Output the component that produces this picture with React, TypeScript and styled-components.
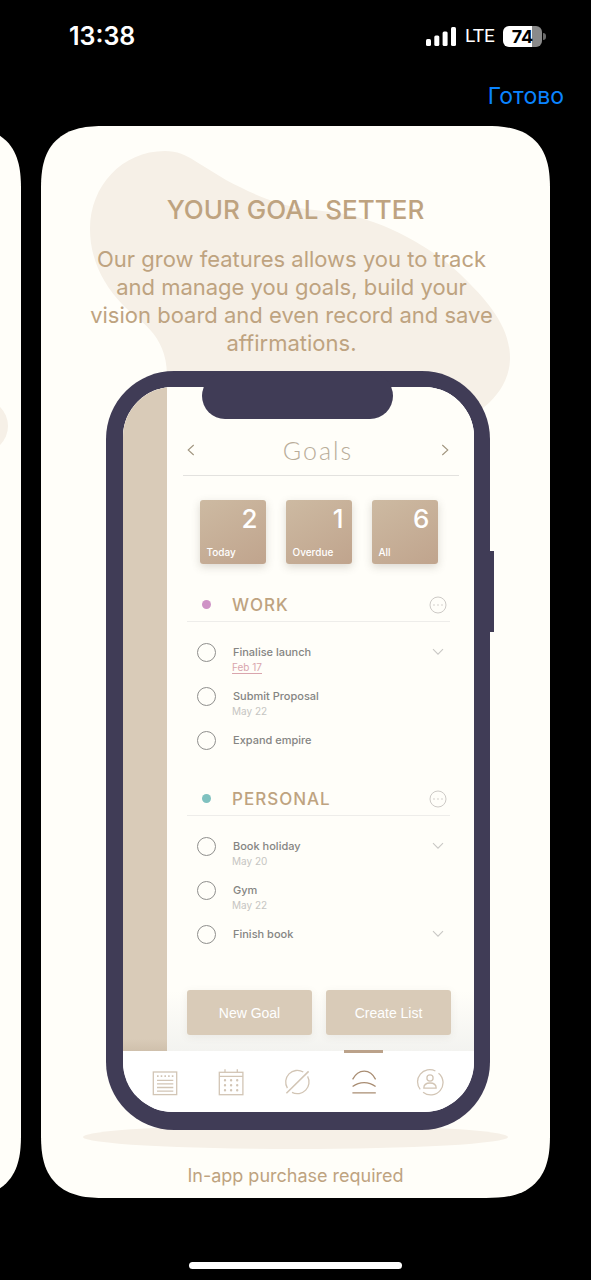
import React from "react";
import styled, { createGlobalStyle, css } from "styled-components";

const color = {
  paper: "#fffef9",
  blob: "#f6f0e7",
  gold: "#bea380",
  sand: "#d9cbb8",
  frame: "#403c56",
  line: "#e9e8e5",
  ink: "#858583",
  faint: "#c6c5c2",
};

const softCorners = css`
  border-radius: 54px;

  @supports (corner-shape: squircle) {
    border-radius: 64px;
    corner-shape: superellipse(1.4);
  }
`;

const GlobalStyle = createGlobalStyle`
  *, *::before, *::after { box-sizing: border-box; }
  body {
    margin: 0;
    background: #000;
    font-family: Inter, "Liberation Sans", sans-serif;
  }
  button { font: inherit; color: inherit; border: 0; padding: 0; background: none; cursor: pointer; }
  h1, h2, h3, p, ul { margin: 0; padding: 0; font-weight: 400; }
  ul { list-style: none; }
  svg { display: block; }
`;

const Page = styled.div`
  min-height: 100vh;
  display: flex;
  flex-direction: column;
  background: #000;
  overflow: hidden;
`;

/* Status bar */

const StatusBar = styled.header`
  display: flex;
  align-items: center;
  justify-content: space-between;
  height: 72px;
  padding: 0 45px 0 69px;
  color: #fff;
`;

const Clock = styled.time`
  font-size: 25px;
  font-weight: 600;
  line-height: 28px;
`;

const StatusIcons = styled.div`
  display: flex;
  align-items: center;
  gap: 9px;
`;

const Carrier = styled.span`
  font-family: Roboto, sans-serif;
  font-size: 19px;
  line-height: 24px;
  width: 29px;
  white-space: nowrap;
`;

const Battery = styled.div`
  display: flex;
  align-items: center;
  gap: 1px;
`;

const BatteryBody = styled.div<{ $level: number }>`
  width: 39px;
  height: 21px;
  border-radius: 6px;
  background: linear-gradient(to right, #fff ${(p) => p.$level}%, #8a8a8a ${(p) => p.$level}%);
  color: #000;
  font-size: 18px;
  font-weight: 700;
  line-height: 21px;
  text-align: center;
`;

const BatteryTip = styled.div`
  width: 3px;
  height: 7px;
  border-radius: 0 3px 3px 0;
  background: #6a6a6a;
`;

/* Viewer */

const Toolbar = styled.div`
  display: flex;
  justify-content: flex-end;
  align-items: center;
  height: 54px;
  padding: 0 27px 6px;
`;

const DoneButton = styled.button`
  color: #0a84ff;
  font-size: 23px;
  line-height: 28px;
`;

const Gallery = styled.main`
  display: grid;
  grid-template-columns: 21px minmax(0, 1fr);
  column-gap: 20px;
  padding-right: 41px;
`;

const PreviousSlot = styled.div`
  display: flex;
  justify-content: flex-end;
`;

const PreviousShot = styled.div`
  flex: none;
  width: 240px;
  display: flex;
  align-items: flex-start;
  background: ${color.paper};
  ${softCorners}
`;

const PreviousBlob = styled.div`
  width: 227px;
  height: 54px;
  margin-top: 273px;
  border-radius: 27px;
  background: ${color.blob};
`;

const Shot = styled.article`
  position: relative;
  isolation: isolate;
  display: flex;
  flex-direction: column;
  align-items: center;
  background: ${color.paper};
  color: ${color.gold};
  padding: 68px 0 10px;
  overflow: hidden;
  ${softCorners}
`;

const Blob = styled.svg`
  position: absolute;
  z-index: -1;
  top: 25px;
  left: 49px;
`;

const Headline = styled.h1`
  font-size: 26px;
  font-weight: 500;
  line-height: 32px;
  white-space: nowrap;
`;

const Pitch = styled.p`
  width: 404px;
  margin: 19px 8px 14px 0;
  font-size: 22px;
  line-height: 28px;
  text-align: center;
`;

const Footnote = styled.p`
  margin-top: 34px;
  font-size: 18px;
  line-height: 24px;
`;

/* Phone mock-up */

const PhoneStage = styled.div`
  position: relative;
  align-self: stretch;
  margin: 0 60px 0 65px;

  &::before {
    content: "";
    position: absolute;
    z-index: -1;
    left: -23px;
    right: -18px;
    bottom: -19px;
    height: 24px;
    border-radius: 50%;
    background: ${color.blob};
  }

  &::after {
    content: "";
    position: absolute;
    left: 100%;
    top: 180px;
    width: 4px;
    height: 81px;
    background: ${color.frame};
  }
`;

const PhoneFrame = styled.div`
  position: relative;
  padding: 16px 16px 18px 17px;
  border-radius: 68px;
  background: ${color.frame};
`;

const Notch = styled.div`
  position: absolute;
  z-index: 1;
  top: 2px;
  left: 96px;
  right: 97px;
  height: 46px;
  border-radius: 23px;
  background: ${color.frame};
`;

const Screen = styled.div`
  border-radius: 50px;
  overflow: hidden;
  background: #fff;
`;

const ScreenBody = styled.div`
  display: flex;
  background: ${color.paper};
`;

const SideStrip = styled.div`
  flex: none;
  width: 44px;
  background: linear-gradient(to top, #cfc0ac, ${color.sand} 12px);
`;

const Content = styled.div`
  flex: 1;
  min-width: 0;
  background: linear-gradient(to top, #f3f3f0, ${color.paper} 60px);
`;

const AppHeader = styled.div`
  display: flex;
  align-items: center;
  justify-content: space-between;
  height: 89px;
  margin: 0 15px 0 16px;
  padding: 37px 10px 0 4px;
  border-bottom: 1px solid #e3e2df;
`;

const IconButton = styled.button`
  display: flex;
  align-items: center;
  justify-content: center;
`;

const AppTitle = styled.h2`
  font-family: Lato, sans-serif;
  font-size: 25px;
  font-weight: 300;
  line-height: 32px;
  letter-spacing: 2px;
  color: #b9ad9a;
`;

const Tiles = styled.div`
  display: flex;
  justify-content: center;
  gap: 20px;
  padding: 24px 4px 4px 0;
`;

const Tile = styled.button`
  display: flex;
  flex-direction: column;
  justify-content: space-between;
  width: 66px;
  height: 64px;
  padding: 5px 8px 6px 7px;
  border-radius: 3px;
  background: linear-gradient(150deg, #cdbaa2, #c0a48d);
  box-shadow: 0 3px 9px rgba(90, 80, 70, 0.22);
  color: #fff;
`;

const TileCount = styled.span`
  align-self: flex-end;
  font-size: 26px;
  font-weight: 500;
  line-height: 28px;
`;

const TileLabel = styled.span`
  align-self: flex-start;
  font-size: 10px;
  font-weight: 500;
  line-height: 12px;
`;

const Section = styled.section`
  margin: 0 24px 0 20px;
  padding-top: 16px;
`;

const SectionHead = styled.div`
  display: grid;
  grid-template-columns: 45px 1fr 25px;
  align-items: center;
  height: 38px;
  padding-top: 4px;
  border-bottom: 1px solid #eeedea;
`;

const Dot = styled.span<{ $tone: string }>`
  width: 9px;
  height: 9px;
  margin-left: 15px;
  border-radius: 50%;
  background: ${(p) => p.$tone};
`;

const SectionTitle = styled.h3`
  font-size: 17px;
  font-weight: 500;
  line-height: 20px;
  letter-spacing: 1px;
`;

const TaskList = styled.ul`
  padding-top: 8px;
`;

const Task = styled.li`
  display: grid;
  grid-template-columns: 35px 1fr 25px;
  align-items: center;
  height: 44px;
  padding-left: 10px;
`;

const Tick = styled.input`
  appearance: none;
  width: 19px;
  height: 19px;
  margin: 0;
  border: 1px solid #8f8f8d;
  border-radius: 50%;

  &:checked {
    background: ${color.sand};
  }
`;

const TaskText = styled.div`
  align-self: start;
  padding-top: 14px;
  white-space: nowrap;
`;

const TaskName = styled.label`
  display: block;
  padding-left: 1px;
  font-size: 11px;
  font-weight: 500;
  line-height: 16px;
  color: ${color.ink};
`;

const DueDate = styled.time<{ $late?: boolean }>`
  display: block;
  font-size: 10px;
  line-height: 14px;
  color: ${(p) => (p.$late ? "#d9a5ad" : color.faint)};
  text-decoration: ${(p) => (p.$late ? "underline" : "none")};
  text-underline-offset: 2px;
`;

const Actions = styled.div`
  display: flex;
  gap: 14px;
  margin: 34px 23px 0 20px;
  padding-bottom: 16px;
`;

const ActionButton = styled.button`
  flex: 1;
  height: 45px;
  border-radius: 3px;
  background: ${color.sand};
  box-shadow: 0 2px 8px rgba(90, 80, 70, 0.08);
  color: #fff;
  font-family: "Liberation Sans", sans-serif;
  font-size: 14px;
`;

const TabBar = styled.nav`
  display: grid;
  grid-template-columns: repeat(5, 1fr);
  height: 61px;
  padding: 0 11px 0 9px;
  background: #fff;
`;

const Tab = styled.button<{ $active?: boolean }>`
  position: relative;
  display: flex;
  align-items: center;
  justify-content: center;
  color: ${(p) => (p.$active ? "#a98d73" : "#d2c5b5")};

  &::before {
    content: "";
    display: ${(p) => (p.$active ? "block" : "none")};
    position: absolute;
    top: -1px;
    width: 39px;
    height: 3px;
    background: #bba28a;
  }
`;

const HomeArea = styled.footer`
  flex: 1;
  display: flex;
  align-items: flex-end;
  justify-content: center;
  min-height: 82px;
  padding-bottom: 11px;
`;

const HomeIndicator = styled.div`
  width: 36%;
  height: 7px;
  border-radius: 4px;
  background: #fff;
`;

/* Drawings */

const SignalIcon = () => (
  <svg width="30" height="19" viewBox="0 0 30 19" fill="#fff" aria-hidden="true">
    <rect x="0" y="12" width="5" height="7" rx="1.5" />
    <rect x="8.3" y="8.5" width="5" height="10.5" rx="1.5" />
    <rect x="16.6" y="4.5" width="5" height="14.5" rx="1.5" />
    <rect x="25" y="0" width="5" height="19" rx="1.5" />
  </svg>
);

const BlobShape = () => (
  <Blob width="421" height="270" viewBox="90 151 421 270" aria-hidden="true">
    <path
      fill={color.blob}
      d="M165 151C122 151 90 186 90 229C90 260 104 285 122 304C137 320 167 333 167 375L167 421L460 421C482 413 510 390 510 358C510 330 492 306 470 284C450 263 431 250 407 237C385 225 365 218 340 213C315 210 298 209 278 203C258 196 243 189 226 180L195 161C186 155 177 151 165 151Z"
    />
  </Blob>
);

const Chevron = ({ dir }: { dir: "left" | "right" | "down" }) => {
  const shape = {
    left: { w: 8, h: 12, d: "M6.7 1L1.2 6L6.7 11" },
    right: { w: 8, h: 12, d: "M1.3 1L6.8 6L1.3 11" },
    down: { w: 12, h: 8, d: "M1 1.2L6 6.2L11 1.2" },
  }[dir];
  return (
    <svg
      width={shape.w}
      height={shape.h}
      viewBox={`0 0 ${shape.w} ${shape.h}`}
      fill="none"
      stroke={dir === "down" ? "#c9c8c5" : "#a1957f"}
      strokeWidth="1.1"
      aria-hidden="true"
    >
      <path d={shape.d} />
    </svg>
  );
};

const MoreIcon = () => (
  <svg width="18" height="18" viewBox="0 0 18 18" fill="none" stroke="#cdcac6" aria-hidden="true">
    <circle cx="9" cy="9" r="8" />
    <path d="M5 9h0M9 9h0M13 9h0" strokeWidth="1.6" strokeLinecap="round" />
  </svg>
);

const TabIcon = ({ children }: { children: React.ReactNode }) => (
  <svg width="28" height="28" viewBox="0 0 28 28" fill="none" stroke="currentColor" strokeWidth="1.3" aria-hidden="true">
    {children}
  </svg>
);

const tabs = [
  {
    name: "Journal",
    icon: (
      <>
        <rect x="2.3" y="4" width="23.4" height="22.6" />
        <path d="M6 8.2H22.5" strokeDasharray="1.6 2.1" strokeWidth="1.8" />
        <path d="M6 12.3H22.3M6 15.9H22.3M6 19.5H22.3M6 23.1H22.3" />
      </>
    ),
  },
  {
    name: "Calendar",
    icon: (
      <>
        <rect x="2.3" y="4.3" width="23.6" height="22.4" />
        <path d="M2.3 8.3H25.9M8 1.3V4.3M20.3 1.3V4.3" />
        <path
          d="M8 12.2h0M14.1 12.2h0M20.2 12.2h0M8 17.2h0M14.1 17.2h0M20.2 17.2h0M8 22.2h0M14.1 22.2h0M20.2 22.2h0"
          strokeWidth="2.4"
          strokeLinecap="round"
        />
      </>
    ),
  },
  {
    name: "Reflect",
    icon: (
      <>
        <path d="M20.3 4A11.7 11.7 0 0 0 4.4 20.2M24.6 8.4A11.7 11.7 0 0 1 9 24.4" />
        <path d="M3.4 25.2L25.6 3.4" strokeWidth="1.5" />
      </>
    ),
  },
  {
    name: "Goals",
    active: true,
    icon: (
      <>
        <path d="M2.6 11.4C5.6 5.6 9.6 3.1 14.2 3.1S22.8 5.6 25.6 11.4" />
        <path d="M2.6 18.6C9.6 13.2 18.6 13.2 25.6 18.6M2.4 24.8H25.8" />
      </>
    ),
  },
  {
    name: "Profile",
    icon: (
      <>
        <path d="M19.4 3A12.2 12.2 0 0 0 4.2 21.4M22.5 5.2A12.2 12.2 0 0 1 7.1 24.2" />
        <circle cx="14" cy="10" r="3.1" />
        <path d="M7.8 20.2C7.8 16.8 10.4 15 14 15S20.2 16.8 20.2 20.2Z" strokeLinejoin="round" />
      </>
    ),
  },
];

const tiles = [
  { count: 2, label: "Today" },
  { count: 1, label: "Overdue" },
  { count: 6, label: "All" },
];

type Goal = { name: string; due?: string; late?: boolean; expandable?: boolean };

const lists: { title: string; tone: string; goals: Goal[] }[] = [
  {
    title: "WORK",
    tone: "#cf93c6",
    goals: [
      { name: "Finalise launch", due: "Feb 17", late: true, expandable: true },
      { name: "Submit Proposal", due: "May 22" },
      { name: "Expand empire" },
    ],
  },
  {
    title: "PERSONAL",
    tone: "#7fc1bf",
    goals: [
      { name: "Book holiday", due: "May 20", expandable: true },
      { name: "Gym", due: "May 22" },
      { name: "Finish book", expandable: true },
    ],
  },
];

const GoalRow = ({ goal }: { goal: Goal }) => {
  const id = React.useId();
  return (
    <Task>
      <Tick type="checkbox" id={id} />
      <TaskText>
        <TaskName htmlFor={id}>{goal.name}</TaskName>
        {goal.due && <DueDate $late={goal.late}>{goal.due}</DueDate>}
      </TaskText>
      {goal.expandable && (
        <IconButton aria-label="Expand">
          <Chevron dir="down" />
        </IconButton>
      )}
    </Task>
  );
};

export default function App() {
  return (
    <Page>
      <GlobalStyle />
      <StatusBar>
        <Clock>13:38</Clock>
        <StatusIcons>
          <SignalIcon />
          <Carrier>LTE</Carrier>
          <Battery>
            <BatteryBody $level={75}>74</BatteryBody>
            <BatteryTip />
          </Battery>
        </StatusIcons>
      </StatusBar>
      <Toolbar>
        <DoneButton>Готово</DoneButton>
      </Toolbar>
      <Gallery>
        <PreviousSlot>
          <PreviousShot>
            <PreviousBlob />
          </PreviousShot>
        </PreviousSlot>
        <Shot>
          <BlobShape />
          <Headline>YOUR GOAL SETTER</Headline>
          <Pitch>
            Our grow features allows you to track and manage you goals, build your vision board and even record and
            save affirmations.
          </Pitch>
          <PhoneStage>
            <PhoneFrame>
              <Notch />
              <Screen>
                <ScreenBody>
                  <SideStrip />
                  <Content>
                    <AppHeader>
                      <IconButton aria-label="Previous">
                        <Chevron dir="left" />
                      </IconButton>
                      <AppTitle>Goals</AppTitle>
                      <IconButton aria-label="Next">
                        <Chevron dir="right" />
                      </IconButton>
                    </AppHeader>
                    <Tiles>
                      {tiles.map((t) => (
                        <Tile key={t.label}>
                          <TileCount>{t.count}</TileCount>
                          <TileLabel>{t.label}</TileLabel>
                        </Tile>
                      ))}
                    </Tiles>
                    {lists.map((list) => (
                      <Section key={list.title}>
                        <SectionHead>
                          <Dot $tone={list.tone} />
                          <SectionTitle>{list.title}</SectionTitle>
                          <IconButton aria-label="More">
                            <MoreIcon />
                          </IconButton>
                        </SectionHead>
                        <TaskList>
                          {list.goals.map((g) => (
                            <GoalRow key={g.name} goal={g} />
                          ))}
                        </TaskList>
                      </Section>
                    ))}
                    <Actions>
                      <ActionButton>New Goal</ActionButton>
                      <ActionButton>Create List</ActionButton>
                    </Actions>
                  </Content>
                </ScreenBody>
                <TabBar>
                  {tabs.map((t) => (
                    <Tab key={t.name} aria-label={t.name} $active={t.active}>
                      <TabIcon>{t.icon}</TabIcon>
                    </Tab>
                  ))}
                </TabBar>
              </Screen>
            </PhoneFrame>
          </PhoneStage>
          <Footnote>In-app purchase required</Footnote>
        </Shot>
      </Gallery>
      <HomeArea>
        <HomeIndicator />
      </HomeArea>
    </Page>
  );
}
